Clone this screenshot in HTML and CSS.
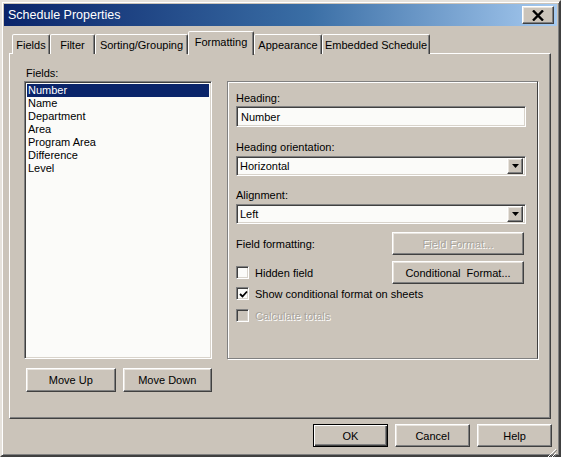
FILE: index.html
```html
<!DOCTYPE html>
<html>
<head>
<meta charset="utf-8">
<link rel="stylesheet" href="styles.css">
</head>
<body>
<div class="window">
  <div class="titlebar">
    <span class="title">Schedule Properties</span>
    <div class="close btn3d"><svg width="12" height="11" viewBox="0 0 12 11"><path d="M1 0.5 L11 10.5 M11 0.5 L1 10.5" stroke="#000" stroke-width="2.4"/></svg></div>
  </div>
  <div class="body">
    <div class="tabs">
      <div class="tab t-fields">Fields</div>
      <div class="tab t-filter">Filter</div>
      <div class="tab t-sort">Sorting/Grouping</div>
      <div class="tab active t-format">Formatting</div>
      <div class="tab t-app">Appearance</div>
      <div class="tab t-emb">Embedded Schedule</div>
    </div>
    <div class="panel">
      <div class="leftcol">
        <div class="label fields-label">Fields:</div>
        <div class="listbox sunken">
          <div class="item selected">Number</div>
          <div class="item">Name</div>
          <div class="item">Department</div>
          <div class="item">Area</div>
          <div class="item">Program Area</div>
          <div class="item">Difference</div>
          <div class="item">Level</div>
        </div>
        <div class="movebtns">
          <div class="btn3d btn move">Move Up</div>
          <div class="btn3d btn move">Move Down</div>
        </div>
      </div>
      <div class="group">
        <div class="label">Heading:</div>
        <div class="input sunken">Number</div>
        <div class="label">Heading orientation:</div>
        <div class="select sunken sel1"><span>Horizontal</span><div class="arrow btn3d"><svg width="7" height="4" viewBox="0 0 7 4"><path d="M0 0 H7 L3.5 4 Z" fill="#000"/></svg></div></div>
        <div class="label">Alignment:</div>
        <div class="select sunken sel2"><span>Left</span><div class="arrow btn3d"><svg width="7" height="4" viewBox="0 0 7 4"><path d="M0 0 H7 L3.5 4 Z" fill="#000"/></svg></div></div>
        <div class="fmt-row">
          <span class="fmt-label">Field formatting:</span>
          <div class="btn3d btn fmt disabled">Field Format...</div>
        </div>
        <div class="fmt-row2">
          <div class="check-row">
            <div class="checkbox sunken"></div>
            <span>Hidden field</span>
          </div>
          <div class="btn3d btn fmt">Conditional&nbsp; Format...</div>
        </div>
        <div class="check-row single show-row">
          <div class="checkbox sunken"><svg width="9" height="9" viewBox="0 0 9 9"><path d="M1 4 L3.5 6.5 L8 1.5" stroke="#000" stroke-width="1.8" fill="none"/></svg></div>
          <span>Show conditional format on sheets</span>
        </div>
        <div class="check-row single calc-row">
          <div class="checkbox sunken grey"></div>
          <span class="dis-text">Calculate totals</span>
        </div>
      </div>
    </div>
    <div class="footer">
      <div class="btn3d btn foot default">OK</div>
      <div class="btn3d btn foot">Cancel</div>
      <div class="btn3d btn foot">Help</div>
      <svg class="grip" width="12" height="12" viewBox="0 0 12 12"><path d="M11 1 L1 11 M11 5 L5 11 M11 9 L9 11" stroke="#fff" stroke-width="1"/><path d="M12 2 L2 12 M12 6 L6 12 M12 10 L10 12" stroke="#808080" stroke-width="1"/></svg>
    </div>
  </div>
</div>
</body>
</html>
```

FILE: styles.css
```css
* { box-sizing: border-box; }
html, body { margin: 0; padding: 0; background: #cbc4ba; }
body {
  font-family: "Liberation Sans", Arial, sans-serif;
  font-size: 11px;
  color: #000;
}
.window {
  width: 561px;
  height: 457px;
  background: #cbc4ba;
  border: 2px solid;
  border-color: #e6e2dc #404040 #404040 #e6e2dc;
  box-shadow: inset 1px 1px #fff, inset -1px -1px #808080;
  padding: 2px;
  position: relative;
}
.titlebar {
  height: 22px;
  background: linear-gradient(to right, #0a246a 0%, #3a6ea5 55%, #a6caf0 100%);
  display: flex;
  align-items: center;
  justify-content: space-between;
  padding: 0 3px 0 4px;
}
.title {
  color: #fff;
  font-family: "Liberation Sans", Arial, sans-serif;
  font-size: 12.5px;
}
.btn3d {
  background: #cbc4ba;
  border: 1px solid;
  border-color: #fff #404040 #404040 #fff;
  box-shadow: inset -1px -1px #808080, inset 1px 1px #e8e4de;
}
.close {
  width: 32px;
  height: 18px;
  display: flex;
  align-items: center;
  justify-content: center;
}
.body {
  padding: 5px 3px 0 5px;
}
.tabs {
  display: flex;
  height: 22px;
  align-items: flex-end;
  padding-left: 3px;
  position: relative;
  z-index: 2;
}
.tab {
  height: 20px;
  border: 1px solid;
  border-bottom: none;
  border-color: #fff #404040 transparent #fff;
  box-shadow: inset -1px 0 #808080;
  border-radius: 2px 2px 0 0;
  display: flex;
  align-items: center;
  justify-content: center;
  white-space: nowrap;
  background: #cbc4ba;
  margin-bottom: -1px;
}
.t-fields { width: 38px; }
.t-filter { width: 45px; }
.t-sort { width: 93px; }
.t-format { width: 66px; }
.t-app { width: 68px; }
.t-emb { width: 108px; }
.tab.active {
  height: 24px;
  margin-bottom: -2px;
  padding-bottom: 3px;
  position: relative;
  z-index: 3;
}
.panel {
  width: 542px;
  height: 366px;
  border: 1px solid;
  border-color: #fff #404040 #404040 #fff;
  box-shadow: inset -1px -1px #808080;
  display: flex;
  padding: 13px 0 0 14px;
  position: relative;
  z-index: 1;
}
.leftcol {
  width: 188px;
  display: flex;
  flex-direction: column;
}
.label {
  height: 13px;
  line-height: 13px;
  white-space: nowrap;
}
.fields-label { margin-left: 2px; }
.sunken {
  background: #fbfbf9;
  border: 1px solid;
  border-color: #808080 #fff #fff #808080;
  box-shadow: inset 1px 1px #404040, inset -1px -1px #d8d3cb;
}
.listbox {
  margin-top: 1px;
  height: 278px;
  padding: 2px 2px;
}
.item {
  height: 13px;
  line-height: 13px;
  padding-left: 1px;
}
.item.selected {
  background: #0a246a;
  color: #fff;
}
.movebtns {
  display: flex;
  gap: 7px;
  margin-top: 9px;
  padding-left: 2px;
}
.btn {
  display: flex;
  align-items: center;
  justify-content: center;
  white-space: nowrap;
}
.move {
  width: 90px;
  height: 24px;
}
.group {
  margin-left: 15px;
  margin-top: 14px;
  width: 311px;
  height: 278px;
  border: 1px solid #808080;
  border-right-color: #404040;
  box-shadow: inset 1px 1px #fff, 1px 1px #fff;
  padding: 10px 0 0 8px;
  display: flex;
  flex-direction: column;
}
.input {
  width: 290px;
  height: 21px;
  margin-top: 1px;
  margin-bottom: 14px;
  padding: 0 4px;
  display: flex;
  align-items: center;
}
.select {
  width: 290px;
  height: 20px;
  margin-top: 2px;
  padding: 0 2px 0 3px;
  display: flex;
  align-items: center;
  justify-content: space-between;
}
.sel1 { margin-bottom: 13px; }
.sel2 { margin-bottom: 8px; }
.arrow {
  width: 16px;
  height: 16px;
  display: flex;
  align-items: center;
  justify-content: center;
}
.fmt-row {
  display: flex;
  align-items: center;
  justify-content: space-between;
  width: 288px;
}
.fmt {
  width: 132px;
  height: 23px;
}
.disabled {
  color: #a8a49c;
  text-shadow: 1px 1px #fff;
}
.fmt-row2 {
  margin-top: 6px;
  display: flex;
  align-items: center;
  justify-content: space-between;
  width: 288px;
}
.check-row {
  display: flex;
  align-items: center;
  gap: 6px;
  white-space: nowrap;
}
.checkbox {
  width: 13px;
  height: 13px;
  display: flex;
  align-items: center;
  justify-content: center;
  padding-left: 1px;
  padding-top: 1px;
}
.checkbox.grey { background: #cbc4ba; }
.single { height: 13px; }
.show-row { margin-top: 3px; }
.calc-row { margin-top: 9px; }
.dis-text {
  color: #a8a49c;
  text-shadow: 1px 1px #fff;
}
.footer {
  display: flex;
  justify-content: flex-end;
  gap: 7px;
  padding-right: 2px;
  margin-top: 5px;
  position: relative;
}
.foot {
  width: 75px;
  height: 23px;
}
.foot.default {
  border: 1px solid #000;
  box-shadow: inset 1px 1px #fff, inset -1px -1px #404040, inset -2px -2px #808080;
}
.grip {
  position: absolute;
  right: -3px;
  bottom: -13px;
}
```
